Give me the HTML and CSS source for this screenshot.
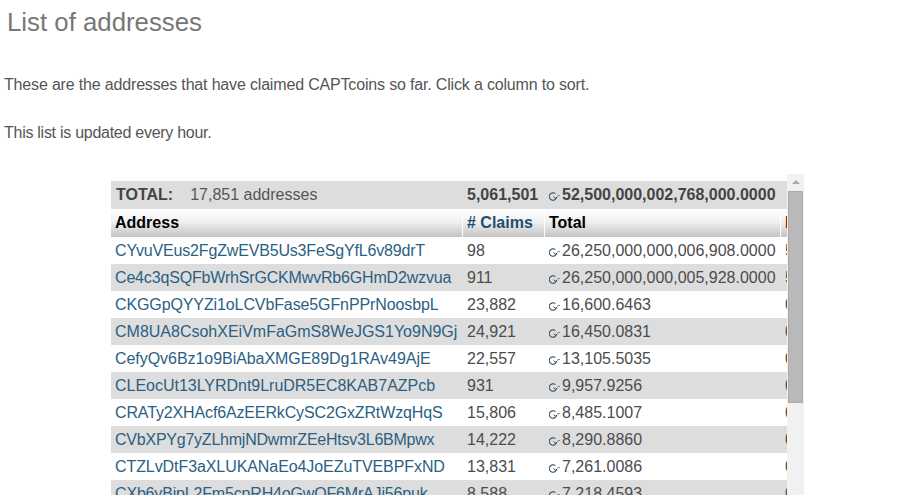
FILE: index.html
```html
<!DOCTYPE html>
<html>
<head>
<meta charset="utf-8">
<title>List of addresses</title>
<link rel="stylesheet" href="styles.css">
</head>
<body>
<svg class="defs" width="0" height="0"><defs>
<symbol id="coin" viewBox="0 0 12 12"><path d="M6.4 3.7A3.7 3.7 0 1 0 7.6 7.2" fill="none" stroke="#3a4f63" stroke-width="1.1"/><path d="M4.6 6.7L6.8 8.4L8.6 6.6" fill="none" stroke="#3a4f63" stroke-width="1"/><path d="M8.6 5.5H11" fill="none" stroke="#7a8a98" stroke-width="1"/></symbol>
</defs></svg>
<h1 class="title">List of addresses</h1>
<p class="intro">These are the addresses that have claimed CAPTcoins so far. Click a column to sort.</p>
<p class="note">This list is updated every hour.</p>
<div class="frame">
  <div class="view">
    <table class="list">
      <colgroup><col class="c-addr"><col class="c-claims"><col class="c-total"><col class="c-rest"></colgroup>
      <thead>
        <tr class="sum">
          <th class="sum-label"><b>TOTAL:</b><span class="sum-count">17,851 addresses</span></th>
          <th>5,061,501</th>
          <th><svg class="coin"><use href="#coin"/></svg>52,500,000,002,768,000.0000</th>
          <th></th>
        </tr>
        <tr class="head">
          <th>Address</th>
          <th class="sortable">#&nbsp;Claims</th>
          <th>Total</th>
          <th class="red">Paid</th>
        </tr>
      </thead>
      <tbody>
        <tr><td><a href="#">CYvuVEus2FgZwEVB5Us3FeSgYfL6v89drT</a></td><td>98</td><td><svg class="coin"><use href="#coin"/></svg>26,250,000,000,006,908.0000</td><td>5</td></tr>
        <tr><td><a href="#">Ce4c3qSQFbWrhSrGCKMwvRb6GHmD2wzvua</a></td><td>911</td><td><svg class="coin"><use href="#coin"/></svg>26,250,000,000,005,928.0000</td><td>5</td></tr>
        <tr><td><a href="#">CKGGpQYYZi1oLCVbFase5GFnPPrNoosbpL</a></td><td>23,882</td><td><svg class="coin"><use href="#coin"/></svg>16,600.6463</td><td>0</td></tr>
        <tr><td><a href="#">CM8UA8CsohXEiVmFaGmS8WeJGS1Yo9N9Gj</a></td><td>24,921</td><td><svg class="coin"><use href="#coin"/></svg>16,450.0831</td><td>0</td></tr>
        <tr><td><a href="#">CefyQv6Bz1o9BiAbaXMGE89Dg1RAv49AjE</a></td><td>22,557</td><td><svg class="coin"><use href="#coin"/></svg>13,105.5035</td><td>0</td></tr>
        <tr><td><a href="#">CLEocUt13LYRDnt9LruDR5EC8KAB7AZPcb</a></td><td>931</td><td><svg class="coin"><use href="#coin"/></svg>9,957.9256</td><td>0</td></tr>
        <tr><td><a href="#">CRATy2XHAcf6AzEERkCySC2GxZRtWzqHqS</a></td><td>15,806</td><td><svg class="coin"><use href="#coin"/></svg>8,485.1007</td><td>0</td></tr>
        <tr><td><a href="#">CVbXPYg7yZLhmjNDwmrZEeHtsv3L6BMpwx</a></td><td>14,222</td><td><svg class="coin"><use href="#coin"/></svg>8,290.8860</td><td>0</td></tr>
        <tr><td><a href="#">CTZLvDtF3aXLUKANaEo4JoEZuTVEBPFxND</a></td><td>13,831</td><td><svg class="coin"><use href="#coin"/></svg>7,261.0086</td><td>0</td></tr>
        <tr><td><a href="#">CXb6yBipL2Fm5cpRH4oGwQF6MrAJi56puk</a></td><td>8,588</td><td><svg class="coin"><use href="#coin"/></svg>7,218.4593</td><td>0</td></tr>
      </tbody>
    </table>
  </div>
  <div class="scrollbar">
    <div class="arrow"></div>
    <div class="thumb"></div>
  </div>
</div>
</body>
</html>
```
FILE: styles.css
```css
html, body { margin: 0; padding: 0; height: 495px; overflow: hidden; background: #fff; }
body { font-family: "Liberation Sans", Arial, sans-serif; font-size: 16px; color: #555; }
.defs { display: block; height: 0; }
.title { margin: 0; padding: 7px 0 0 7px; font-size: 25.8px; line-height: 30px; font-weight: normal; color: #777; }
.intro { margin: 38px 0 0; padding: 0 0 0 4px; line-height: 20px; letter-spacing: -0.17px; }
.note { margin: 28px 0 0; padding: 0 0 0 4px; line-height: 20px; letter-spacing: -0.27px; }
.frame { display: flex; align-items: flex-start; margin: 31px 0 0 111px; width: 693px; height: 400px; }
.view { width: 676px; padding-top: 7px; overflow: hidden; flex: none; }
.list { width: 820px; table-layout: fixed; border-collapse: separate; border-spacing: 0; }
.c-addr { width: 352px; }
.c-claims { width: 82px; }
.c-total { width: 236px; }
.c-rest { width: 150px; }
.list th, .list td { padding: 0 0 0 4px; text-align: left; white-space: nowrap; overflow: hidden; }
.sum th { height: 28px; background: #ddd; color: #444; }
.sum .sum-label { padding-left: 5px; font-weight: normal; }
.sum-count { margin-left: 17px; color: #555; }
.head th { height: 28px; color: #000; background: linear-gradient(#fff, #f0f0f0 45%, #c4c4c4); border-right: 1px solid #fff; }
.head th.sortable { color: #1f4e6e; }
.head th.red { color: #800; }
.list td { height: 27px; color: #4c4c4c; }
.list td a { color: #2b5f83; text-decoration: none; letter-spacing: -0.17px; }
tbody tr:nth-child(3) a { letter-spacing: -0.11px; }
tbody tr:nth-child(4) a { letter-spacing: 0; }
tbody tr:nth-child(5) a { letter-spacing: -0.05px; }
tbody tr:nth-child(6) a { letter-spacing: -0.02px; }
tbody tr:nth-child(7) a { letter-spacing: -0.14px; }
tbody tr:nth-child(8) a { letter-spacing: -0.23px; }
tbody tr:nth-child(9) a { letter-spacing: -0.08px; }
tbody tr:nth-child(even) td { background: #ddd; }
.coin { display: inline-block; width: 12px; height: 12px; vertical-align: -2px; margin-right: 1px; }
.scrollbar { flex: none; width: 17px; height: 330px; background: #f1f1f1; display: flex; flex-direction: column; align-items: center; }
.arrow { width: 0; height: 0; margin-top: 6px; border-left: 4px solid transparent; border-right: 4px solid transparent; border-bottom: 4px solid #a9a9a9; }
.thumb { width: 15px; height: 212px; margin-top: 7px; background: #b9b9b9; border: 1px solid #aaa; box-sizing: border-box; }
```
